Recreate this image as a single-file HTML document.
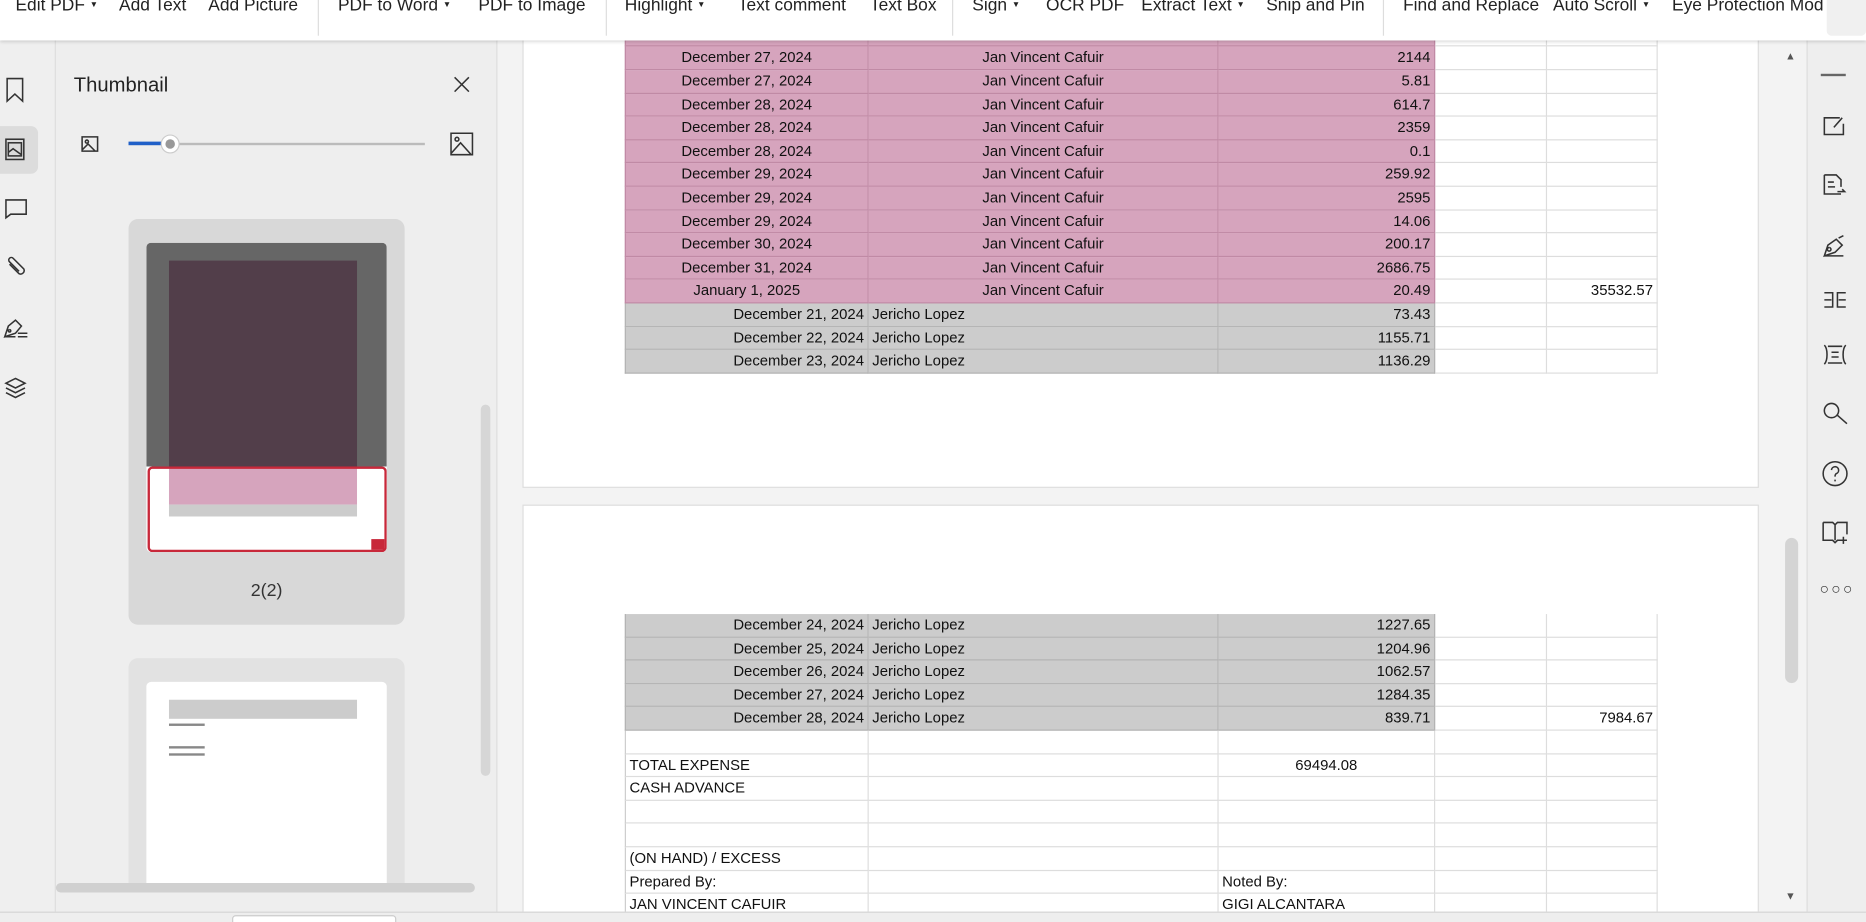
<!DOCTYPE html>
<html><head><meta charset="utf-8">
<style>
*{box-sizing:border-box;margin:0;padding:0}
html,body{width:1866px;height:922px;overflow:hidden;background:#f3f3f3;font-family:"Liberation Sans",Arial,sans-serif}
#w{position:absolute;left:0;top:0;width:1568px;height:775px;transform:scale(1.19005);transform-origin:0 0;overflow:hidden;background:#f3f3f3}
.abs{position:absolute}
#tb{left:0;top:0;width:1568px;height:34px;background:#fff;box-shadow:0 1px 3px rgba(0,0,0,.18);z-index:5}
#tb span{position:absolute;top:-3px;font-size:14.6px;color:#222;white-space:nowrap}
.dv{position:absolute;top:0;width:1px;height:30px;background:#ddd}
#tb span.car{position:static;font-size:7px;vertical-align:3px}
#ls{left:0;top:34px;width:47px;height:732px;background:#efefef;border-right:1px solid #ddd}
#tp{left:47px;top:34px;width:371px;height:732px;background:#eeeeee;border-right:1px solid #ddd}
#doc{left:419px;top:34px;width:1099px;height:732px;background:#f3f3f3;overflow:hidden}
.page{position:absolute;left:20px;width:1039px;background:#fff;border:1px solid #ddd}
.row{position:absolute;left:85px;height:19.6px;width:868px;font-size:12.5px;color:#111}
.c{position:absolute;top:0;height:100%;border-right:1px solid #ddd;border-bottom:1px solid #ddd;line-height:19px;white-space:nowrap;overflow:hidden;padding:0 3px}
.pk .c1,.pk .c2,.pk .c3{background:#d6a4bd;border-color:#c08aa5}
.gy .c1,.gy .c2,.gy .c3{background:#cccccc;border-color:#b3b3b3}
.c1{left:0;width:205px;border-left:1px solid #ccc}
.c2{left:205px;width:294px}
.c3{left:499px;width:182px;text-align:right}
.c4{left:681px;width:94px}
.c5{left:775px;width:93px;text-align:right}
.pk .c1,.pk .c2{text-align:center}
.gy .c1{text-align:right}
#rs{left:1518px;top:34px;width:50px;height:732px;background:#eeeeee;border-left:1px solid #ddd}
#sb{left:0;top:766px;width:1568px;height:9px;background:#eeeeee;border-top:1px solid #d5d5d5}
svg{position:absolute;fill:none;stroke:#333;stroke-width:1.3}
.tl{position:absolute;left:19px;width:158px;height:1px;background:rgba(0,0,0,.25)}
</style></head><body><div id="w">

<div id="tb" class="abs">
<span style="left:13px">Edit PDF <span class="car">&#9660;</span></span>
<span style="left:100px">Add Text</span>
<span style="left:175px">Add Picture</span>
<div class="dv" style="left:267px"></div>
<span style="left:284px">PDF to Word <span class="car">&#9660;</span></span>
<span style="left:402px">PDF to Image</span>
<div class="dv" style="left:509px"></div>
<span style="left:525px">Highlight <span class="car">&#9660;</span></span>
<span style="left:620px">Text comment</span>
<span style="left:731px">Text Box</span>
<div class="dv" style="left:800px"></div>
<span style="left:817px">Sign <span class="car">&#9660;</span></span>
<span style="left:879px">OCR PDF</span>
<span style="left:959px">Extract Text <span class="car">&#9660;</span></span>
<span style="left:1064px">Snip and Pin</span>
<div class="dv" style="left:1162px"></div>
<span style="left:1179px">Find and Replace</span>
<span style="left:1305px">Auto Scroll <span class="car">&#9660;</span></span>
<span style="left:1405px">Eye Protection Mod</span>
<div class="abs" style="left:1535px;top:0;width:33px;height:30px;background:#f0f0f0;border-radius:0 0 4px 4px"></div>
</div>

<div id="ls" class="abs">
<svg style="left:3px;top:31px" width="20" height="22" viewBox="0 0 20 22"><path d="M3 1h13v19l-6.5-6-6.5 6z"/></svg>
<div class="abs" style="left:0;top:72px;width:32px;height:40px;background:#dcdcdc;border-radius:0 6px 6px 0"></div>
<svg style="left:3px;top:82px" width="20" height="20" viewBox="0 0 20 20"><rect x="2" y="1" width="15" height="17"/><rect x="4" y="4" width="11" height="11"/><path d="M4 12l4-3 7 5"/></svg>
<svg style="left:3px;top:132px" width="22" height="20" viewBox="0 0 22 20"><path d="M2 2h17v12H6l-4 3z"/></svg>
<svg style="left:2px;top:180px" width="24" height="24" viewBox="0 0 24 24"><path d="M6 8l8 8a3 3 0 0 0 4-4L9 3a2 2 0 0 0-3 3l8 8"/></svg>
<svg style="left:2px;top:232px" width="24" height="22" viewBox="0 0 24 22"><path d="M2 17l3-9 6-5 5 5-5 6zM6 11a1 1 0 1 0 .1 0M13 14h8M13 17h8M2 17h9"/></svg>
<svg style="left:2px;top:282px" width="22" height="22" viewBox="0 0 22 22"><path d="M11 2l8 4-8 4-8-4zM3 10l8 4 8-4M3 14l8 4 8-4"/></svg>
</div>

<div id="tp" class="abs">
<div class="abs" style="left:15px;top:28px;font-size:17px;color:#222">Thumbnail</div>
<svg style="left:333px;top:29px" width="16" height="16" viewBox="0 0 16 16"><path d="M2 2l12 12M14 2L2 14"/></svg>
<svg style="left:20px;top:78px" width="18" height="18" viewBox="0 0 18 18"><path d="M2 3h13v12H2zM2 14l5-5 6 6"/><circle cx="6" cy="7" r="1.3"/></svg>
<div class="abs" style="left:61px;top:86px;width:249px;height:2px;background:#bbb"></div>
<div class="abs" style="left:61px;top:85px;width:35px;height:3px;background:#2060c8"></div>
<div class="abs" style="left:88px;top:79px;width:16px;height:16px;border-radius:50%;background:#fff;border:1px solid #ccc"><div class="abs" style="left:3px;top:3px;width:8px;height:8px;border-radius:50%;background:#999"></div></div>
<svg style="left:330px;top:76px" width="22" height="22" viewBox="0 0 22 22"><path d="M2 2h18v18H2zM2 19l8-9 9 10"/><circle cx="7" cy="7" r="1.6"/></svg>
<div class="abs" style="left:61px;top:150px;width:232px;height:341px;background:#d8d8d8;border-radius:8px"></div>
<div class="abs" style="left:76px;top:170px;width:202px;height:260px;background:#fff;border-radius:4px;overflow:hidden">
 <div class="abs" style="left:0;top:0;width:202px;height:188px;background:#666"></div>
 <div class="abs" style="left:19px;top:15px;width:158px;height:173px;background:#523e4a"></div>
 <div class="abs" style="left:19px;top:188px;width:158px;height:32px;background:#d6a4bd"></div>
 <div class="abs" style="left:19px;top:220px;width:158px;height:10px;background:#ccc"></div>
 <div class="abs" style="left:1px;top:188px;width:201px;height:72px;border:2px solid #c8283a;border-radius:4px"></div>
 <div class="abs" style="left:189px;top:249px;width:11px;height:9px;background:#c8283a"></div>
</div>
<div class="abs" style="left:61px;top:454px;width:232px;text-align:center;font-size:15px;color:#333">2(2)</div>
<div class="abs" style="left:61px;top:519px;width:232px;height:190px;background:#e2e2e2;border-radius:8px 8px 0 0"></div>
<div class="abs" style="left:76px;top:539px;width:202px;height:170px;background:#fff;border-radius:4px 4px 0 0">
 <div class="abs" style="left:19px;top:15px;width:158px;height:16px;background:#ccc"></div>
 <div class="abs" style="left:19px;top:35px;width:30px;height:2px;background:#888"></div>
 <div class="abs" style="left:19px;top:54px;width:30px;height:2px;background:#888"></div>
 <div class="abs" style="left:19px;top:60px;width:30px;height:2px;background:#888"></div>
</div>
<div class="abs" style="left:0;top:708px;width:352px;height:8px;background:#d0d0d0;border-radius:4px"></div>
<div class="abs" style="left:357px;top:306px;width:8px;height:312px;background:#d6d6d6;border-radius:4px"></div>
</div>

<div id="doc" class="abs">
<div class="page" style="top:-6px;height:382px"><div class="abs" style="left:0;top:5.4px;width:1039px">
<div class="row pk" style="top:-10px;height:15px"><div class="c c1"></div><div class="c c2"></div><div class="c c3"></div><div class="c c4"></div><div class="c c5"></div></div>
<div class="row pk" style="top:5px"><div class="c c1">December 27, 2024</div><div class="c c2">Jan Vincent Cafuir</div><div class="c c3">2144</div><div class="c c4"></div><div class="c c5"></div></div>
<div class="row pk" style="top:24.6px"><div class="c c1">December 27, 2024</div><div class="c c2">Jan Vincent Cafuir</div><div class="c c3">5.81</div><div class="c c4"></div><div class="c c5"></div></div>
<div class="row pk" style="top:44.2px"><div class="c c1">December 28, 2024</div><div class="c c2">Jan Vincent Cafuir</div><div class="c c3">614.7</div><div class="c c4"></div><div class="c c5"></div></div>
<div class="row pk" style="top:63.8px"><div class="c c1">December 28, 2024</div><div class="c c2">Jan Vincent Cafuir</div><div class="c c3">2359</div><div class="c c4"></div><div class="c c5"></div></div>
<div class="row pk" style="top:83.4px"><div class="c c1">December 28, 2024</div><div class="c c2">Jan Vincent Cafuir</div><div class="c c3">0.1</div><div class="c c4"></div><div class="c c5"></div></div>
<div class="row pk" style="top:103px"><div class="c c1">December 29, 2024</div><div class="c c2">Jan Vincent Cafuir</div><div class="c c3">259.92</div><div class="c c4"></div><div class="c c5"></div></div>
<div class="row pk" style="top:122.6px"><div class="c c1">December 29, 2024</div><div class="c c2">Jan Vincent Cafuir</div><div class="c c3">2595</div><div class="c c4"></div><div class="c c5"></div></div>
<div class="row pk" style="top:142.2px"><div class="c c1">December 29, 2024</div><div class="c c2">Jan Vincent Cafuir</div><div class="c c3">14.06</div><div class="c c4"></div><div class="c c5"></div></div>
<div class="row pk" style="top:161.8px"><div class="c c1">December 30, 2024</div><div class="c c2">Jan Vincent Cafuir</div><div class="c c3">200.17</div><div class="c c4"></div><div class="c c5"></div></div>
<div class="row pk" style="top:181.4px"><div class="c c1">December 31, 2024</div><div class="c c2">Jan Vincent Cafuir</div><div class="c c3">2686.75</div><div class="c c4"></div><div class="c c5"></div></div>
<div class="row pk" style="top:201px"><div class="c c1">January 1, 2025</div><div class="c c2">Jan Vincent Cafuir</div><div class="c c3">20.49</div><div class="c c4"></div><div class="c c5">35532.57</div></div>
<div class="row gy" style="top:220.6px"><div class="c c1">December 21, 2024</div><div class="c c2">Jericho Lopez</div><div class="c c3">73.43</div><div class="c c4"></div><div class="c c5"></div></div>
<div class="row gy" style="top:240.2px"><div class="c c1">December 22, 2024</div><div class="c c2">Jericho Lopez</div><div class="c c3">1155.71</div><div class="c c4"></div><div class="c c5"></div></div>
<div class="row gy" style="top:259.8px"><div class="c c1">December 23, 2024</div><div class="c c2">Jericho Lopez</div><div class="c c3">1136.29</div><div class="c c4"></div><div class="c c5"></div></div>
</div></div>

<div class="page" style="top:390px;height:360px">
<div class="row gy" style="top:91px"><div class="c c1">December 24, 2024</div><div class="c c2">Jericho Lopez</div><div class="c c3">1227.65</div><div class="c c4"></div><div class="c c5"></div></div>
<div class="row gy" style="top:110.6px"><div class="c c1">December 25, 2024</div><div class="c c2">Jericho Lopez</div><div class="c c3">1204.96</div><div class="c c4"></div><div class="c c5"></div></div>
<div class="row gy" style="top:130.2px"><div class="c c1">December 26, 2024</div><div class="c c2">Jericho Lopez</div><div class="c c3">1062.57</div><div class="c c4"></div><div class="c c5"></div></div>
<div class="row gy" style="top:149.8px"><div class="c c1">December 27, 2024</div><div class="c c2">Jericho Lopez</div><div class="c c3">1284.35</div><div class="c c4"></div><div class="c c5"></div></div>
<div class="row gy" style="top:169.4px"><div class="c c1">December 28, 2024</div><div class="c c2">Jericho Lopez</div><div class="c c3">839.71</div><div class="c c4"></div><div class="c c5">7984.67</div></div>
<div class="row" style="top:189px"><div class="c c1"></div><div class="c c2"></div><div class="c c3"></div><div class="c c4"></div><div class="c c5"></div></div>
<div class="row" style="top:208.6px"><div class="c c1">TOTAL EXPENSE</div><div class="c c2"></div><div class="c c3" style="text-align:center">69494.08</div><div class="c c4"></div><div class="c c5"></div></div>
<div class="row" style="top:228.2px"><div class="c c1">CASH ADVANCE</div><div class="c c2"></div><div class="c c3"></div><div class="c c4"></div><div class="c c5"></div></div>
<div class="row" style="top:247.8px"><div class="c c1"></div><div class="c c2"></div><div class="c c3"></div><div class="c c4"></div><div class="c c5"></div></div>
<div class="row" style="top:267.4px"><div class="c c1"></div><div class="c c2"></div><div class="c c3"></div><div class="c c4"></div><div class="c c5"></div></div>
<div class="row" style="top:287px"><div class="c c1">(ON HAND) / EXCESS</div><div class="c c2"></div><div class="c c3"></div><div class="c c4"></div><div class="c c5"></div></div>
<div class="row" style="top:306.6px"><div class="c c1">Prepared By:</div><div class="c c2"></div><div class="c c3" style="text-align:left">Noted By:</div><div class="c c4"></div><div class="c c5"></div></div>
<div class="row" style="top:326.2px"><div class="c c1">JAN VINCENT CAFUIR</div><div class="c c2"></div><div class="c c3" style="text-align:left">GIGI ALCANTARA</div><div class="c c4"></div><div class="c c5"></div></div>
</div>

<div class="abs" style="left:1081px;top:8px;font-size:9px;color:#555">&#9650;</div>
<div class="abs" style="left:1081px;top:714px;font-size:9px;color:#555">&#9660;</div>
<div class="abs" style="left:1081px;top:418px;width:11px;height:122px;background:#d4d4d4;border-radius:6px"></div>
</div>

<div id="rs" class="abs">
<div class="abs" style="left:11px;top:28px;width:21px;height:2px;background:#666"></div>
<svg style="left:12px;top:61px" width="22" height="20" viewBox="0 0 22 20"><path d="M15 4H2v14h16V9M10 12l7-8"/></svg>
<svg style="left:12px;top:111px" width="22" height="22" viewBox="0 0 22 22"><path d="M2 2h10l4 4v6M2 2v16h14M5 8h5M5 12h6M13 16h6l-2-2"/></svg>
<svg style="left:11px;top:162px" width="24" height="22" viewBox="0 0 24 22"><path d="M3 19l3-9 7-5 5 5-6 6zM7 12a1.5 1.5 0 1 0 .1 0M3 19h16M15 4l4-2"/></svg>
<svg style="left:12px;top:208px" width="22" height="20" viewBox="0 0 22 20"><path d="M2 4h7v12H2M2 10h6M20 4h-7v12h7M14 10h6"/></svg>
<svg style="left:11px;top:253px" width="24" height="22" viewBox="0 0 24 22"><path d="M3 3c3 3 3 13 0 16M21 3c-3 3-3 13 0 16M6 4h12M6 18h12M9 9h6M9 13h6"/></svg>
<svg style="left:11px;top:302px" width="24" height="24" viewBox="0 0 24 24"><circle cx="9" cy="9" r="6"/><path d="M14 13l8 7"/></svg>
<svg style="left:11px;top:352px" width="24" height="24" viewBox="0 0 24 24"><circle cx="12" cy="12" r="10"/><path d="M9 9a3 3 0 1 1 4 3c-1 .5-1 1.5-1 2.5M12 17v1.5"/></svg>
<svg style="left:11px;top:402px" width="24" height="22" viewBox="0 0 24 22"><path d="M2 3h8l2 2 2-2h8v10M2 3v15h8l2 2 2-2h2M12 5v13M19 15v6M16 18h6"/></svg>
<div class="abs" style="left:10px;top:453px;font-size:13px;color:#333;letter-spacing:2px">&#9675;&#9675;&#9675;</div>
</div>

<div id="sb" class="abs">
<div class="abs" style="left:195px;top:2px;width:138px;height:10px;background:#fff;border:1px solid #ccc;border-radius:3px"></div>
</div>
</div></body></html>
